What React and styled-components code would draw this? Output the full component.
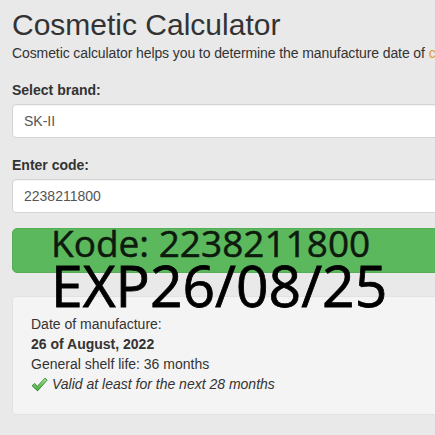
import React from 'react'
import styled, { createGlobalStyle } from 'styled-components'

const GlobalStyle = createGlobalStyle`
    html, body {
        margin: 0;
        padding: 0;
        background: #e9e9e9;
        overflow: hidden;
    }
    body {
        font-family: "Liberation Sans", Arial, sans-serif;
        color: #333;
    }
`

function CheckIcon() {
    return (
        <svg width="17" height="15" viewBox="0 0 16 14">
            <defs>
                <linearGradient id="chk" x1="0" y1="0" x2="0" y2="1">
                    <stop offset="0" stopColor="#a8e88c" />
                    <stop offset="1" stopColor="#3fa83f" />
                </linearGradient>
            </defs>
            <path
                d="M1 8.2 L3.4 6 L6 8.6 L13.2 1 L15.2 2.8 L6.2 13 Z"
                fill="url(#chk)"
                stroke="#2f7d2f"
                strokeWidth="0.8"
                strokeLinejoin="round"
            />
        </svg>
    )
}

function App() {
    return (
        <>
            <GlobalStyle />
            <Page>
                <Title>Cosmetic Calculator</Title>
                <Lead>
                    Cosmetic calculator helps you to determine the manufacture date of <a>cosmetics and perfume</a>
                </Lead>

                <Label>Select brand:</Label>
                <Select defaultValue="SK-II">
                    <option>SK-II</option>
                </Select>

                <Label>Enter code:</Label>
                <Input type="text" defaultValue="2238211800" readOnly />

                <CheckButton type="button" aria-label="Check" />

                <Result>
                    <Line>Date of manufacture:</Line>
                    <Line bold>26 of August, 2022</Line>
                    <Line>General shelf life: 36 months</Line>
                    <Line italic>
                        <CheckIcon />
                        Valid at least for the next 28 months
                    </Line>
                </Result>

                <Stamp>
                    <StampCode>Kode: 2238211800</StampCode>
                    <StampExp>EXP26/08/25</StampExp>
                </Stamp>
            </Page>
        </>
    )
}

const Page = styled.div`
    position: relative;
    width: 470px;
    padding: 8px 0 30px 12px;
    display: flex;
    flex-direction: column;
`

const Title = styled.h1`
    margin: 0;
    font-size: 30px;
    line-height: 33px;
    font-weight: 400;
    color: #333;
`

const Lead = styled.p`
    margin: 2px 0 0 0;
    font-size: 14px;
    line-height: 20px;
    letter-spacing: -0.1px;
    white-space: nowrap;
    color: #333;

    a {
        color: #e59a2f;
    }
`

const Label = styled.label`
    display: block;
    margin-top: 18px;
    font-size: 14px;
    line-height: 18px;
    font-weight: 700;
    color: #333;

    & + select, & + input {
        margin-top: 5px;
    }
`

const fieldStyle = `
    box-sizing: border-box;
    width: 100%;
    height: 34px;
    padding: 0 11px;
    border: 1px solid #d4d4d4;
    border-radius: 4px;
    background: #fff;
    box-shadow: inset 0 1px 1px rgba(0, 0, 0, 0.05);
    font-family: "Liberation Sans", Arial, sans-serif;
    font-size: 14px;
    color: #555;
    outline: none;
`

const Select = styled.select`
    ${fieldStyle}
    appearance: none;
    -webkit-appearance: none;
`

const Input = styled.input`
    ${fieldStyle}
`

const CheckButton = styled.button`
    margin-top: 15px;
    height: 45px;
    width: 100%;
    border: 1px solid #55ad55;
    border-radius: 5px;
    background: #5cb85c;
`

const Result = styled.div`
    margin-top: 23px;
    padding: 17px 18px 20px 18px;
    background: #f4f4f4;
    border: 1px solid #e2e2e2;
    border-radius: 4px;
`

const Line = styled.div`
    display: flex;
    align-items: center;
    gap: 4px;
    font-size: 14px;
    line-height: 20px;
    color: #333;
    font-weight: ${p => (p.bold ? 700 : 400)};
    font-style: ${p => (p.italic ? 'italic' : 'normal')};
`

const Stamp = styled.div`
    position: absolute;
    left: 51px;
    top: 225px;
    display: flex;
    flex-direction: column;
    font-family: "Open Sans", "Noto Sans", sans-serif;
    font-weight: 400;
    color: #000;
    pointer-events: none;
`

const StampCode = styled.div`
    font-size: 37px;
    line-height: 36px;
    color: #0d1a0d;
    -webkit-text-stroke: 0.5px #0d1a0d;
    white-space: nowrap;
`

const StampExp = styled.div`
    margin-top: -4px;
    font-size: 57px;
    line-height: 56px;
    -webkit-text-stroke: 0.8px #000;
    white-space: nowrap;
`

export default App
